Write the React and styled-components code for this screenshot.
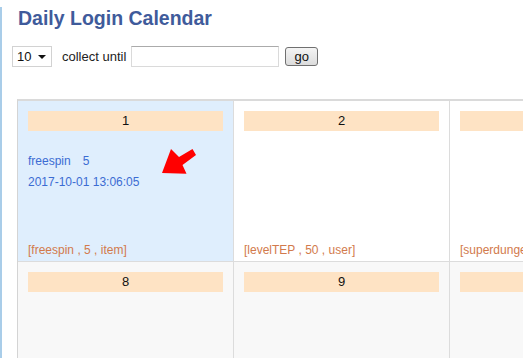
import styled, { createGlobalStyle } from 'styled-components';

const GlobalStyle = createGlobalStyle`
  html, body {
    margin: 0;
    padding: 0;
    overflow: hidden;
    background: #fff;
  }
  body {
    font-family: 'Liberation Sans', Arial, sans-serif;
    font-size: 13px;
    color: #222;
  }
`;

const Page = styled.div`
  min-height: 100vh;
  border-left: 2px solid #a9cde9;
  padding-left: 10px;
  box-sizing: border-box;
`;

const Title = styled.h1`
  margin: 7px 0 0 6px;
  font-size: 19.5px;
  line-height: 22px;
  font-weight: bold;
  color: #3f5b9b;
`;

const Controls = styled.div`
  display: flex;
  align-items: center;
  height: 21px;
  margin-top: 17px;
`;

const Select = styled.div`
  width: 40px;
  height: 21px;
  box-sizing: border-box;
  border: 1px solid #d2d2d2;
  display: flex;
  align-items: center;
  justify-content: space-between;
  padding: 0 5px 0 4px;
  font-size: 13px;
  color: #111;
  background: #fff;
`;

const Caret = styled.span`
  width: 0;
  height: 0;
  border-left: 4px solid transparent;
  border-right: 4px solid transparent;
  border-top: 4px solid #111;
`;

const Label = styled.span`
  margin-left: 10px;
  font-size: 13px;
  color: #222;
`;

const Input = styled.input`
  margin-left: 5px;
  width: 148px;
  height: 21px;
  box-sizing: border-box;
  border: 1px solid #dadada;
  border-top-color: #ababab;
  padding: 0 3px;
  font-family: inherit;
  font-size: 13px;
  outline: none;
`;

const GoButton = styled.button`
  margin-left: 6px;
  width: 33px;
  height: 19px;
  box-sizing: border-box;
  border: 1px solid #707070;
  border-radius: 3px;
  background: linear-gradient(#f4f4f4, #dcdcdc);
  font-family: inherit;
  font-size: 13px;
  color: #111;
  padding: 0;
  line-height: 16px;
`;

const Calendar = styled.div`
  margin: 32px 0 0 5px;
  display: grid;
  grid-template-columns: repeat(3, 216px);
  border-top: 2px solid #dadada;
  border-left: 1px solid #d4d4d4;
  width: max-content;
`;

const Cell = styled.div`
  position: relative;
  height: 161px;
  box-sizing: border-box;
  padding: 10px 10px 2px;
  border-right: 1px solid #dcdcdc;
  border-bottom: 1px solid #dcdcdc;
  background: ${(p) => (p.$done ? '#dfeefd' : p.$row > 0 ? '#f8f8f8' : '#fff')};
  display: flex;
  flex-direction: column;
`;

const DayBar = styled.div`
  height: 20px;
  line-height: 20px;
  background: #fee3c4;
  text-align: center;
  font-size: 13px;
  color: #111;
`;

const Info = styled.div`
  margin-top: 20px;
  font-size: 12px;
  line-height: 21px;
  color: #3c6cd3;
`;

const Amount = styled.span`
  margin-left: 12px;
`;

const Reward = styled.div`
  margin-top: auto;
  font-size: 12px;
  line-height: 18px;
  color: #d27a4c;
  white-space: nowrap;
  overflow: hidden;
`;

const Arrow = styled.svg`
  position: absolute;
  left: 137px;
  top: 44px;
`;

// visible part of the week grid: days 1-3 and 8-10
const days = [
  { day: 1, reward: ['freespin', 5, 'item'], row: 0 },
  { day: 2, reward: ['levelTEP', 50, 'user'], row: 0 },
  { day: 3, reward: ['superdungeon', 1, 'item'], row: 0 },
  { day: 8, row: 1 },
  { day: 9, row: 1 },
  { day: 10, row: 1 },
];

function App() {
  return (
    <>
      <GlobalStyle />
      <Page>
        <Title>Daily Login Calendar</Title>
        <Controls>
          <Select>
            10
            <Caret />
          </Select>
          <Label>collect until</Label>
          <Input type='text' />
          <GoButton>go</GoButton>
        </Controls>
        <Calendar>
          {days.map(({ day, reward, row }) => (
            <Cell key={day} $done={day === 1} $row={row}>
              <DayBar>{day}</DayBar>
              {day === 1 && (
                <>
                  <Info>
                    freespin<Amount>5</Amount>
                    <br />
                    2017-10-01 13:06:05
                  </Info>
                  <Arrow width='45' height='35' viewBox='0 0 45 35'>
                    <polygon
                      points='7,28 16,4 24,12 37.5,4 41,10 27.5,20 31.5,28.7'
                      fill='#ff0000'
                    />
                  </Arrow>
                </>
              )}
              {reward && (
                <Reward>
                  [{reward[0]} , {reward[1]} , {reward[2]}]
                </Reward>
              )}
            </Cell>
          ))}
        </Calendar>
      </Page>
    </>
  );
}

export default App;
